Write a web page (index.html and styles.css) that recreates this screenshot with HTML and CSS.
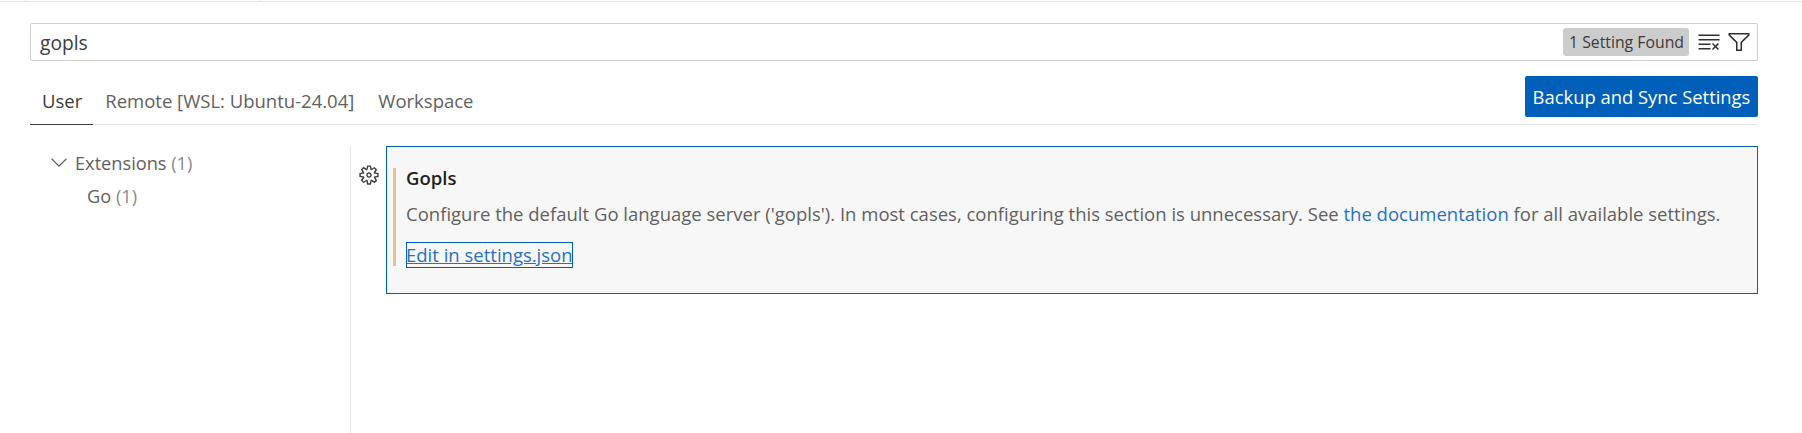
FILE: index.html
```html
<!DOCTYPE html>
<html lang="en">
<head>
    <meta charset="UTF-8">
    <title>Settings</title>
    <link rel="stylesheet" href="styles.css">
</head>
<body>
    <div class="top-strip">
        <div class="strip-cell strip-first"></div>
        <div class="strip-cell strip-second"></div>
    </div>

    <div class="search-box">
        <span class="search-text">gopls</span>
        <span class="count-badge">1 Setting Found</span>
        <svg class="search-icon" viewBox="0 0 16 16"><path d="M10 12.6l.7.7 1.6-1.6 1.6 1.6.8-.7L13 11l1.7-1.6-.8-.8-1.6 1.7-1.6-1.6-.7.7 1.6 1.6-1.6 1.6zM1 4h14V3H1v1zm0 3h14V6H1v1zm8 2.5V9H1v1h8v-.5zM9 13v-1H1v1h8z"/></svg>
        <svg class="search-icon" viewBox="0 0 16 16"><path d="M15 2v1.67l-5 4.759V14H6V8.429l-5-4.76V2h14zM7 8v5h2V8l5-4.76V3H2v.24L7 8z"/></svg>
    </div>

    <div class="tabs-row">
        <div class="tabs">
            <div class="tab active">User</div>
            <div class="tab">Remote [WSL: Ubuntu-24.04]</div>
            <div class="tab">Workspace</div>
        </div>
        <button class="sync-btn">Backup and Sync Settings</button>
    </div>

    <div class="main">
        <div class="toc">
            <div class="toc-item">
                <svg class="chevron" viewBox="0 0 16 16"><path d="M8 10.9L2.3 5.2l.6-.6L8 9.7l5.1-5.1.6.6z"/></svg>
                <span>Extensions <span class="count">(1)</span></span>
            </div>
            <div class="toc-item toc-child"><span>Go <span class="count">(1)</span></span></div>
        </div>

        <div class="settings">
            <svg class="gear" viewBox="0 0 16 16"><path fill-rule="evenodd" d="M9.1 4.4L8.6 2H7.4l-.5 2.4-.7.3-2-1.3-.9.8 1.3 2-.2.7-2.4.5v1.2l2.4.5.3.8-1.3 2 .8.8 2-1.3.8.3.4 2.3h1.2l.5-2.4.8-.3 2 1.3.8-.8-1.3-2 .3-.8 2.3-.4V7.4l-2.4-.5-.3-.8 1.3-2-.8-.8-2 1.3-.7-.2zM9.4 1l.5 2.4L12 2.1l2 2-1.4 2.1 2.4.4v2.8l-2.4.5L14 12l-2 2-2.1-1.4-.5 2.4H6.6l-.5-2.4L4 13.9l-2-2 1.4-2.1L1 9.4V6.6l2.4-.5L2.1 4l2-2 2.1 1.4.4-2.4h2.8zm.6 7c0 1.1-.9 2-2 2s-2-.9-2-2 .9-2 2-2 2 .9 2 2zM8 9c.6 0 1-.4 1-1s-.4-1-1-1-1 .4-1 1 .4 1 1 1z"/></svg>
            <div class="setting-card">
                <div class="setting-body">
                    <div class="setting-title">Gopls</div>
                    <div class="setting-desc">Configure the default Go language server ('gopls'). In most cases, configuring this section is unnecessary. See <a class="link" href="#">the documentation</a> for all available settings.</div>
                    <a class="edit-link" href="#">Edit in settings.json</a>
                </div>
            </div>
        </div>
    </div>
</body>
</html>
```

FILE: styles.css
```css
* {
    box-sizing: border-box;
    margin: 0;
    padding: 0;
}

html, body {
    height: 100%;
    overflow: hidden;
}

body {
    display: flex;
    flex-direction: column;
    background-color: #ffffff;
    color: #616161;
    font-family: "Open Sans", "Noto Sans", sans-serif;
    font-size: 18.5px;
    padding: 0 44px 0 30px;
}

.top-strip {
    display: flex;
    height: 2px;
    margin: 0 -44px 21px -30px;
    border-bottom: 1px solid #e5e5e5;
}

.strip-cell {
    border-right: 1px solid #e5e5e5;
}

.strip-first {
    width: 26px;
}

.strip-second {
    width: 235px;
}

.search-box {
    display: flex;
    align-items: center;
    height: 38px;
    padding: 0 6px 0 9px;
    border: 1px solid #cecece;
    border-radius: 2px;
}

.search-text {
    flex: 1;
    font-size: 19.2px;
    color: #3b3b3b;
}

.count-badge {
    height: 28px;
    line-height: 28px;
    padding: 0 5px 0 6px;
    margin-right: 8px;
    border-radius: 3px;
    background-color: #cccccc;
    color: #3b3b3b;
    font-size: 15.8px;
}

.search-icon {
    width: 24px;
    height: 24px;
    fill: #2f2f2f;
}

.search-icon + .search-icon {
    margin-left: 6px;
}

.tabs-row {
    display: flex;
    justify-content: space-between;
    align-items: flex-start;
    height: 64px;
    padding-top: 15px;
    border-bottom: 1px solid #e5e5e5;
}

.tabs {
    display: flex;
    align-self: flex-end;
    margin-bottom: -1px;
}

.tab {
    height: 44px;
    line-height: 40px;
    padding: 0 12px;
    color: #616161;
    font-size: 18.5px;
}

.tab.active {
    padding-right: 11px;
    color: #3b3b3b;
    border-bottom: 1px solid #3b3b3b;
}

.sync-btn {
    height: 41px;
    width: 233px;
    border: none;
    border-radius: 2px;
    background-color: #005fb8;
    color: #ffffff;
    font-family: inherit;
    font-size: 18.4px;
    white-space: nowrap;
}

.main {
    flex: 1;
    display: flex;
    margin-top: 21px;
}

.toc {
    width: 321px;
    border-right: 1px solid #e5e5e5;
    font-size: 18.2px;
}

.toc-item {
    display: flex;
    align-items: center;
    gap: 5px;
    height: 33px;
    padding-left: 18px;
}

.toc-child {
    padding-left: 57px;
}

.count {
    color: #8a8a8a;
}

.chevron {
    width: 22px;
    height: 22px;
    fill: #616161;
}

.settings {
    flex: 1;
    display: flex;
    align-items: flex-start;
    gap: 6px;
    padding-left: 7px;
}

.gear {
    width: 22px;
    height: 22px;
    margin-top: 18px;
    flex-shrink: 0;
    fill: #3b3b3b;
}

.setting-card {
    flex: 1;
    height: 148px;
    padding: 21px 0 0 6px;
    border: 1px solid #005fb8;
    background-color: #f7f7f7;
}

.setting-body {
    height: 98px;
    margin-top: 3px;
    padding-left: 10px;
    border-left: 3px solid #dfc391;
}

.setting-title {
    margin-top: -3px;
    font-weight: 600;
    color: #1f1f1f;
    line-height: 20px;
}

.setting-desc {
    margin-top: 14px;
    line-height: 24px;
}

.link {
    color: #2672be;
    text-decoration: none;
}

.edit-link {
    display: inline-block;
    margin-top: 16px;
    height: 26px;
    line-height: 26px;
    outline: 1px solid #005fb8;
    outline-offset: -1px;
    color: #2672be;
}
```
